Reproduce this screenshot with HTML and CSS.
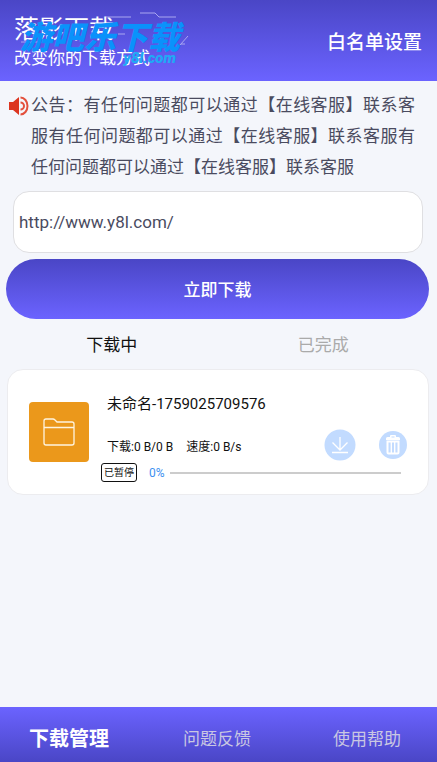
FILE: index.html
```html
<!DOCTYPE html>
<html lang="zh-CN">
<head>
<meta charset="utf-8">
<meta name="viewport" content="width=device-width, initial-scale=1">
<title>落影下载</title>
<link rel="stylesheet" href="styles.css">
</head>
<body>
<header class="header">
  <div class="brand">
    <h1 class="brand-title">落影下载</h1>
    <p class="brand-slogan">改变你的下载方式</p>
    <div class="stamp">
      <svg class="stamp-lines" viewBox="0 0 170 54" aria-hidden="true">
        <path d="M86 5h25M120 1h15l4 4h17M160 33l8-9M161 32h4M1 30h18M98 22h7"/>
      </svg>
      <span class="stamp-name">游吧乐下载</span>
      <span class="stamp-site">y8l.com</span>
    </div>
  </div>
  <a class="whitelist" href="#whitelist">白名单设置</a>
</header>

<main class="main">
  <section class="notice">
    <svg class="notice-icon" viewBox="0 0 20 20" aria-hidden="true">
      <path class="horn" d="M0 6h4l6-5v18l-6-5H0z"/>
      <path class="wave" d="M11.500 6.500a3.500 3.500 0 0 1 0 7M11.500 1.500a7 8.500 0 0 1 0 17"/>
    </svg>
    <p class="notice-text">公告：有任何问题都可以通过【在线客服】联系客服有任何问题都可以通过【在线客服】联系客服有任何问题都可以通过【在线客服】联系客服</p>
  </section>

  <form class="form">
    <input class="url" type="text" aria-label="下载地址" value="http://www.y8l.com/">
    <button class="submit" type="button">立即下载</button>
  </form>

  <div class="tabs">
    <button class="tab tab-active" type="button">下载中</button>
    <button class="tab" type="button">已完成</button>
  </div>

  <article class="card">
    <svg class="thumb" viewBox="0 0 60 60" aria-hidden="true">
      <rect width="60" height="60" rx="4" fill="#eb981b"/>
      <path d="M15 25.500V19q0-2 2-2h7q1 0 2 1l2 2h15q2 0 2 2v19q0 2-2 2H17q-2 0-2-2V25.500h30" fill="none" stroke="#fff4df" stroke-width="1.300"/>
    </svg>
    <div class="info">
      <h2 class="name">未命名-1759025709576</h2>
      <div class="row">
        <p class="meta"><span>下载:0 B/0 B</span><span>速度:0 B/s</span></p>
        <div class="actions">
          <button class="action" type="button" aria-label="开始下载">
            <svg width="32" height="32" viewBox="0 0 32 32" aria-hidden="true">
              <circle cx="16" cy="16" r="15.500" fill="#c2dbff"/>
              <path d="M16 8v13M8.500 13.500L16 21l7.500-7.500M8 23.500h16" fill="none" stroke="#fff" stroke-width="1.300"/>
            </svg>
          </button>
          <button class="action" type="button" aria-label="删除">
            <svg width="28" height="28" viewBox="0 0 28 28" aria-hidden="true">
              <circle cx="14" cy="14" r="14" fill="#c2dbff"/>
              <path d="M7 9V7.500q0-1.500 1.500-1.500H11V5q0-1 1-1h4q1 0 1 1v1h2.500Q21 6 21 7.500V9zM12.500 6.500h3V5.500h-3z" fill="#fff" fill-rule="evenodd"/>
              <path d="M8.500 10.500h11v11q0 1-1 1h-9q-1 0-1-1z" fill="none" stroke="#fff" stroke-width="2"/>
              <path d="M12.300 11v11M15.700 11v11" stroke="#fff" stroke-width="1.400"/>
            </svg>
          </button>
        </div>
      </div>
      <div class="status">
        <span class="badge">已暂停</span>
        <span class="percent">0%</span>
        <div class="track"></div>
      </div>
    </div>
  </article>
</main>

<nav class="nav">
  <a class="nav-item nav-active" href="#downloads">下载管理</a>
  <a class="nav-item" href="#feedback">问题反馈</a>
  <a class="nav-item" href="#help">使用帮助</a>
</nav>
</body>
</html>
```

FILE: styles.css
```css
* {
  box-sizing: border-box;
}

body {
  margin: 0;
  min-height: 100vh;
  display: flex;
  flex-direction: column;
  background: #f4f6fb;
  color: #111;
  font-family: Roboto, "Noto Sans CJK SC", sans-serif;
  font-size: 17px;
}

h1, h2, p {
  margin: 0;
  font-weight: 400;
}

button {
  border: 0;
  padding: 0;
  background: none;
  color: inherit;
  font: inherit;
}

a {
  color: inherit;
  text-decoration: none;
}

.header {
  display: flex;
  align-items: center;
  justify-content: space-between;
  padding: 12px 15px 11px 14px;
  background: linear-gradient(#4a46c6, #6b63ff);
  color: #fff;
}

.brand {
  position: relative;
}

.brand-title {
  font-size: 25px;
  line-height: 35px;
}

.brand-slogan {
  font-size: 17px;
  line-height: 23px;
}

.stamp {
  position: absolute;
  top: 0;
  left: 6px;
  width: 170px;
  color: #0a92fb;
  font-style: italic;
  white-space: nowrap;
}

.stamp-lines {
  position: absolute;
  inset: 0;
  width: 170px;
  height: 54px;
  fill: none;
  stroke: #aaa7f0;
  stroke-width: 1;
}

.stamp-name {
  position: relative;
  display: block;
  font-size: 32px;
  font-weight: 900;
  line-height: 52px;
}

.stamp-site {
  position: absolute;
  top: 38px;
  right: 14px;
  color: #20a9f5;
  font-size: 15px;
  font-weight: 900;
  line-height: 16px;
}

.whitelist {
  padding-bottom: 2px;
  font-size: 19px;
  font-weight: 500;
}

.main {
  flex: 1;
  padding: 9px 8px 9px 6px;
}

.notice {
  display: flex;
  gap: 2px;
  padding: 0 14px 0 3px;
}

.notice-icon {
  flex: none;
  width: 20px;
  height: 20px;
  margin-top: 6px;
}

.horn {
  fill: #dc3520;
}

.wave {
  fill: none;
  stroke: #e3503c;
  stroke-width: 2;
}

.notice-text {
  flex: 1;
  color: #4a4b5f;
  line-height: 31px;
  text-align: justify;
}

.form {
  display: flex;
  flex-direction: column;
  gap: 6px;
  padding-top: 8px;
}

.url {
  height: 62px;
  margin: 0 6px 0 7px;
  padding: 0 5px;
  border: 1px solid #dfdfe2;
  border-radius: 16px;
  background: #fff;
  color: #4a4b5f;
  font: inherit;
}

.submit {
  height: 60px;
  padding-bottom: 2px;
  border-radius: 30px;
  background: linear-gradient(#4a46c6, #6b63ff);
  color: #fff;
  font-weight: 500;
}

.tabs {
  display: grid;
  grid-template-columns: 1fr 1fr;
}

.tab {
  height: 50px;
  padding-bottom: 2px;
  color: #aaa;
}

.tab-active {
  color: #111;
}

.card {
  display: flex;
  gap: 12px;
  margin-left: 1px;
  padding: 22px 21px 12px;
  border: 1px solid #ececef;
  border-radius: 16px;
  background: #fff;
}

.thumb {
  flex: none;
  width: 60px;
  height: 60px;
  margin-top: 10px;
}

.info {
  flex: 1;
}

.name {
  padding-left: 6px;
  font-size: 15px;
  line-height: 24px;
}

.row {
  display: flex;
  align-items: center;
  justify-content: space-between;
  margin-top: 13px;
  padding-left: 6px;
}

.meta {
  display: flex;
  gap: 13px;
  font-size: 12px;
}

.actions {
  display: flex;
  align-items: center;
  gap: 23px;
}

.action {
  display: flex;
}

.status {
  display: flex;
  align-items: center;
  margin-top: 2px;
  padding-right: 6px;
  font-size: 12px;
}

.badge {
  padding: 0 2px;
  border: 1px solid #111;
  border-radius: 3px;
  font-size: 10px;
  line-height: 17px;
}

.percent {
  margin: 0 5px 0 12px;
  color: #3d8ff0;
}

.track {
  flex: 1;
  height: 2px;
  background: #ccc;
}

.nav {
  display: flex;
  align-items: center;
  height: 55px;
  padding-top: 6px;
  padding-left: 29px;
  background: linear-gradient(#6b63ff, #4a46c6);
  color: #c9c7e2;
}

.nav-item {
  flex: 1;
}

.nav-active {
  flex: 0 1 154px;
  color: #fff;
  font-size: 20px;
  font-weight: 700;
}

.nav-item:last-child {
  flex: 0 1 104px;
}
```
